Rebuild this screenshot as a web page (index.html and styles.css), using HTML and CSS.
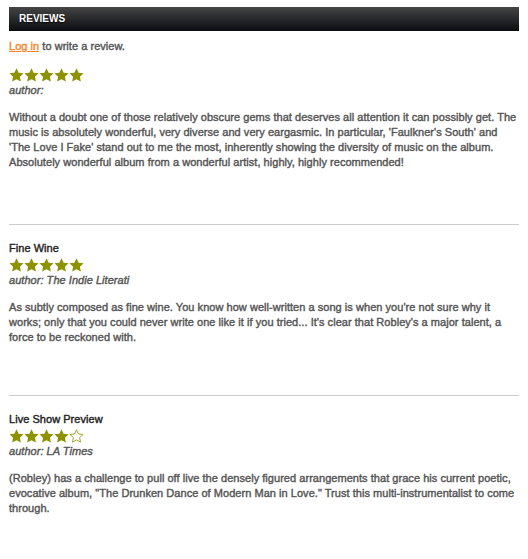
FILE: index.html
```html
<!DOCTYPE html>
<html>
<head>
<meta charset="utf-8">
<link rel="stylesheet" href="styles.css">
</head>
<body>
<div class="reviews">
  <h2 class="bar">Reviews</h2>
  <p class="login"><a href="#">Log in</a> to write a review.</p>

  <div class="review first">
    <div class="stars">
      <svg viewBox="0 0 75 14" width="75" height="14"><g class="full"><polygon points="7.5,0.2 9.62,4.69 14.54,5.31 10.92,8.71 11.85,13.59 7.5,11.2 3.15,13.59 4.08,8.71 0.46,5.31 5.38,4.69"/><polygon transform="translate(15 0)" points="7.5,0.2 9.62,4.69 14.54,5.31 10.92,8.71 11.85,13.59 7.5,11.2 3.15,13.59 4.08,8.71 0.46,5.31 5.38,4.69"/><polygon transform="translate(30 0)" points="7.5,0.2 9.62,4.69 14.54,5.31 10.92,8.71 11.85,13.59 7.5,11.2 3.15,13.59 4.08,8.71 0.46,5.31 5.38,4.69"/><polygon transform="translate(45 0)" points="7.5,0.2 9.62,4.69 14.54,5.31 10.92,8.71 11.85,13.59 7.5,11.2 3.15,13.59 4.08,8.71 0.46,5.31 5.38,4.69"/><polygon transform="translate(60 0)" points="7.5,0.2 9.62,4.69 14.54,5.31 10.92,8.71 11.85,13.59 7.5,11.2 3.15,13.59 4.08,8.71 0.46,5.31 5.38,4.69"/></g></svg>
    </div>
    <div class="author">author:</div>
    <p class="text">Without a doubt one of those relatively obscure gems that deserves all attention it can possibly get. The music is absolutely wonderful, very diverse and very eargasmic. In particular, 'Faulkner's South' and 'The Love I Fake' stand out to me the most, inherently showing the diversity of music on the album. Absolutely wonderful album from a wonderful artist, highly, highly recommended!</p>
  </div>

  <div class="review second">
    <h3 class="title">Fine Wine</h3>
    <div class="stars">
      <svg viewBox="0 0 75 14" width="75" height="14"><g class="full"><polygon points="7.5,0.2 9.62,4.69 14.54,5.31 10.92,8.71 11.85,13.59 7.5,11.2 3.15,13.59 4.08,8.71 0.46,5.31 5.38,4.69"/><polygon transform="translate(15 0)" points="7.5,0.2 9.62,4.69 14.54,5.31 10.92,8.71 11.85,13.59 7.5,11.2 3.15,13.59 4.08,8.71 0.46,5.31 5.38,4.69"/><polygon transform="translate(30 0)" points="7.5,0.2 9.62,4.69 14.54,5.31 10.92,8.71 11.85,13.59 7.5,11.2 3.15,13.59 4.08,8.71 0.46,5.31 5.38,4.69"/><polygon transform="translate(45 0)" points="7.5,0.2 9.62,4.69 14.54,5.31 10.92,8.71 11.85,13.59 7.5,11.2 3.15,13.59 4.08,8.71 0.46,5.31 5.38,4.69"/><polygon transform="translate(60 0)" points="7.5,0.2 9.62,4.69 14.54,5.31 10.92,8.71 11.85,13.59 7.5,11.2 3.15,13.59 4.08,8.71 0.46,5.31 5.38,4.69"/></g></svg>
    </div>
    <div class="author">author: The Indie Literati</div>
    <p class="text">As subtly composed as fine wine. You know how well-written a song is when you're not sure why it works; only that you could never write one like it if you tried... It's clear that Robley's a major talent, a force to be reckoned with.</p>
  </div>

  <div class="review last">
    <h3 class="title">Live Show Preview</h3>
    <div class="stars">
      <svg viewBox="0 0 75 14" width="75" height="14"><g class="full"><polygon points="7.5,0.2 9.62,4.69 14.54,5.31 10.92,8.71 11.85,13.59 7.5,11.2 3.15,13.59 4.08,8.71 0.46,5.31 5.38,4.69"/><polygon transform="translate(15 0)" points="7.5,0.2 9.62,4.69 14.54,5.31 10.92,8.71 11.85,13.59 7.5,11.2 3.15,13.59 4.08,8.71 0.46,5.31 5.38,4.69"/><polygon transform="translate(30 0)" points="7.5,0.2 9.62,4.69 14.54,5.31 10.92,8.71 11.85,13.59 7.5,11.2 3.15,13.59 4.08,8.71 0.46,5.31 5.38,4.69"/><polygon transform="translate(45 0)" points="7.5,0.2 9.62,4.69 14.54,5.31 10.92,8.71 11.85,13.59 7.5,11.2 3.15,13.59 4.08,8.71 0.46,5.31 5.38,4.69"/></g><g class="empty"><polygon transform="translate(60 0)" points="7.5,0.8 9.45,4.95 14,5.5 10.65,8.6 11.5,13.1 7.5,10.9 3.5,13.1 4.35,8.6 1,5.5 5.55,4.95"/></g></svg>
    </div>
    <div class="author">author: LA Times</div>
    <p class="text">(Robley) has a challenge to pull off live the densely figured arrangements that grace his current poetic, evocative album, "The Drunken Dance of Modern Man in Love." Trust this multi-instrumentalist to come through.</p>
  </div>
</div>
</body>
</html>
```

FILE: styles.css
```css
html, body {
  margin: 0;
  padding: 0;
  background: #fff;
}
body {
  padding: 7px 9px 0 9px;
  font-family: "Liberation Sans", Arial, sans-serif;
  font-size: 11px;
  font-weight: normal;
  color: #555;
  letter-spacing: 0.04px;
  -webkit-text-stroke: 0.4px currentColor;
}
.bar {
  margin: 0;
  height: 24px;
  line-height: 24px;
  padding: 0 10px;
  font-size: 10px;
  font-weight: bold;
  letter-spacing: 0;
  text-transform: uppercase;
  color: #fff;
  -webkit-text-stroke: 0;
  text-shadow: 0 1px 1px #000;
  background: linear-gradient(#454545, #0a0c11);
}
.login {
  margin: 9px 0 0 0;
  line-height: 13px;
}
.login a {
  color: #f7862b;
  text-decoration: underline;
}
.review {
  border-bottom: 1px solid #cccccc;
  padding-bottom: 54px;
}
.review.first .stars {
  margin-top: 15px;
}
.review.second {
  padding-bottom: 50px;
}
.review.last {
  border-bottom: none;
}
.title {
  margin: 16px 0 0 0;
  font-size: 11px;
  font-weight: normal;
  line-height: 14px;
  color: #222;
}
.stars {
  height: 14px;
  margin-top: 3px;
}
.stars svg {
  display: block;
}
.full polygon {
  fill: #8d9200;
}
.empty polygon {
  fill: #fff;
  stroke: #8d9200;
  stroke-width: 0.8;
}
.author {
  margin-top: 2px;
  font-style: italic;
  line-height: 13px;
}
.text {
  margin: 13px 0 0 0;
  line-height: 15px;
}
```
